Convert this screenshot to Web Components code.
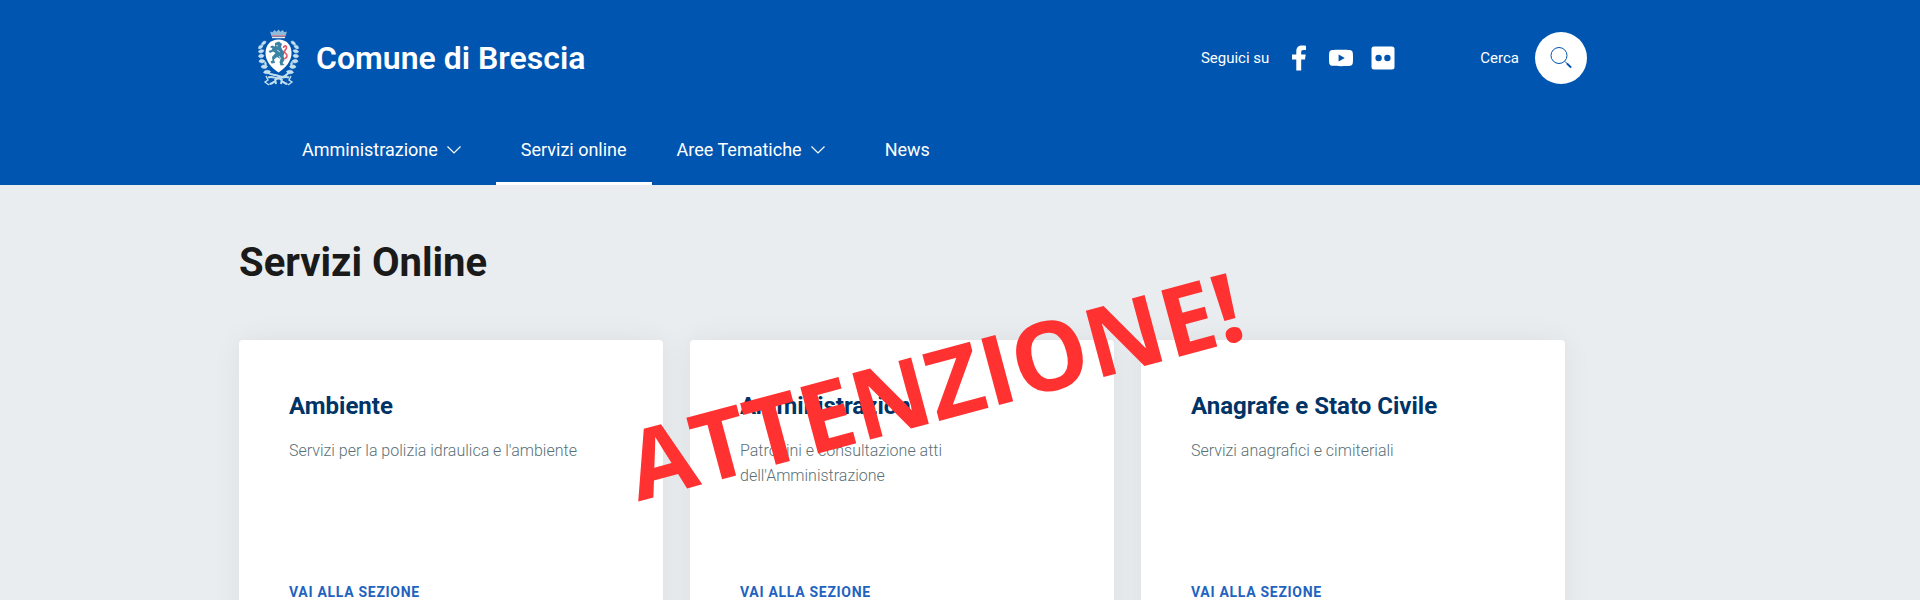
<!DOCTYPE html>
<html lang="it">
<head>
    <meta charset="utf-8">
    <meta name="viewport" content="width=device-width, initial-scale=1">
    <title>Servizi Online - Comune di Brescia</title>
    <style>
        html, body {
            margin: 0;
            height: 100%;
        }
        body {
            --blue: #0055b0;
            --navy: #003366;
            --link: #1f63c0;
            display: flex;
            flex-direction: column;
            overflow: hidden;
            background: #e9edf0;
            color: #1a1a1a;
            font-family: Roboto, "Liberation Sans", sans-serif;
        }
    </style>
</head>
<body>
    <site-header>
        <site-brand slot="brand">Comune di Brescia</site-brand>
        <social-links slot="tools">Seguici su</social-links>
        <search-button slot="tools">Cerca</search-button>
        <nav-item slot="nav" dropdown>Amministrazione</nav-item>
        <nav-item slot="nav" active>Servizi online</nav-item>
        <nav-item slot="nav" dropdown>Aree Tematiche</nav-item>
        <nav-item slot="nav">News</nav-item>
    </site-header>

    <services-section heading="Servizi Online">
        <service-card heading="Ambiente">Servizi per la polizia idraulica e l'ambiente</service-card>
        <service-card heading="Amministrazione">Patrocini e consultazione atti dell'Amministrazione</service-card>
        <service-card heading="Anagrafe e Stato Civile">Servizi anagrafici e cimiteriali</service-card>
        <warning-stamp slot="overlay">ATTENZIONE!</warning-stamp>
    </services-section>

    <script>
        class SiteHeader extends HTMLElement {
            connectedCallback() {
                this.attachShadow({ mode: 'open' });
                this.shadowRoot.innerHTML = `
                    <style>
                        :host {
                            display: block;
                            flex: none;
                            background: var(--blue);
                            color: #fff;
                        }
                        .top {
                            display: flex;
                            align-items: center;
                            justify-content: space-between;
                            padding: 29px 333px 28px 258px;
                        }
                        .tools {
                            display: flex;
                            align-items: center;
                            gap: 85px;
                        }
                        nav {
                            display: flex;
                            padding: 0 277px;
                        }
                    </style>
                    <header>
                        <div class="top">
                            <slot name="brand"></slot>
                            <div class="tools"><slot name="tools"></slot></div>
                        </div>
                        <nav aria-label="Principale"><slot name="nav"></slot></nav>
                    </header>
                `;
            }
        }
        customElements.define('site-header', SiteHeader);

        class SiteBrand extends HTMLElement {
            connectedCallback() {
                this.attachShadow({ mode: 'open' });
                this.shadowRoot.innerHTML = `
                    <style>
                        :host { display: block; }
                        a {
                            display: flex;
                            align-items: center;
                            gap: 16px;
                            color: inherit;
                            text-decoration: none;
                            font-size: 32px;
                            line-height: 40px;
                            font-weight: 600;
                        }
                        svg { display: block; }
                    </style>
                    <a href="#">
                        <svg width="42" height="58" viewBox="0 0 42 58" aria-hidden="true">
                            <!-- crown -->
                            <path d="M13.500 7 12 2.500l2.500.700L16.500 1l2 1.700 2-2.200 2 2.200L24.500 1l2 2.200 2.500-.700L27.500 7z" fill="#8fbcd8"/>
                            <path d="M13.500 6.300h14v1.200h-14z" fill="#e8747f"/>
                            <path d="M14 7.800h13v1.400H14z" fill="#dcecf5"/>
                            <!-- shield -->
                            <path d="M20.500 10.500C28 10.500 33.500 15.500 33.500 24 33.500 32 28 38.500 20.500 43.500 13 38.500 7.500 32 7.500 24 7.500 15.500 13 10.500 20.500 10.500z" fill="#fff"/>
                            <!-- lion -->
                            <path d="M17 14l4-1.500 3 2.500-1 3 1.500 3 2 2-1 4 1 4-2 3 2 2-4 .500-1-3.500 1-3-3.500-2-3 2.500 1 3.500-3.500.500-1-2 2-1-.500-3.500 3.500-4-2.500-1.500-3 1.500-1.500-2 3-1 1-1.500-2.500-1.500 2-1.500 3 1z" fill="#3a83a4"/>
                            <path d="M18 16.500l2 .500M19 21l3 2M21 27l2 3" stroke="#b9dcea" stroke-width="1"/>
                            <path d="M25.500 19c0-2.500 3-3 3-.500s-2.500 2.500-2 4.500 3 1.500 2.500 4-2 2-2.500 3" fill="none" stroke="#e8566a" stroke-width="1.600"/>
                            <!-- laurel branches -->
                            <g id="branch" fill="#c4e0ef" stroke="#c4e0ef" stroke-width=".7" stroke-linejoin="round">
                                <path d="M8 12.500c-2.500-1-4 .500-4.500 3 2.500.500 4-.500 4.500-3z"/>
                                <path d="M5 16.500c-2.500-1-4.500 0-4.500 3 2.500.500 4-.500 4.500-3z"/>
                                <path d="M6 21.500c-2-1.500-5-1-5.500 1.500 2 1.500 4.500 1 5.500-1.500z"/>
                                <path d="M6 26.500c-2-2-5-1.500-5.500 1 2 2 4.500 1.500 5.500-1z"/>
                                <path d="M7 32c-2-2-5.500-2-6 .500 2 2 5 2 6-.500z"/>
                                <path d="M9.500 37.500c-2.500-2-5.500-2-6.500.500 2 2 5.500 2 6.500-.500z"/>
                                <path d="M12.500 42.500c-2.500-2-6-1.500-7 1 2.500 2 6 1.500 7-1z"/>
                                <path d="M8 37c1-2 0-4-1-4.500-1 2 0 3.500 1 4.500z"/>
                            </g>
                            <use href="#branch" transform="matrix(-1 0 0 1 41 0)"/>
                            <!-- ribbon and knot -->
                            <g fill="none" stroke="#c4e0ef" stroke-width="2">
                                <path d="M10 43.500c3 3 6 1.500 10.500 3.500s7 0 10.500-3.500"/>
                                <path d="M10 48.500c4-2 7 1 10.500 1s6-3 10.500-1"/>
                                <path d="M20.500 49c-3 0-4 6-9 6M20.500 49c3 0 4 6 9 6M17 50l1 5M24 50l-1 5"/>
                                <path d="M8 47l2 4-3 2 4 3M33 47l-2 4 3 2-4 3" stroke-width="1.400"/>
                            </g>
                        </svg>
                        <span><slot></slot></span>
                    </a>
                `;
            }
        }
        customElements.define('site-brand', SiteBrand);

        class SocialLinks extends HTMLElement {
            connectedCallback() {
                this.attachShadow({ mode: 'open' });
                this.shadowRoot.innerHTML = `
                    <style>
                        :host {
                            display: flex;
                            align-items: center;
                            gap: 18px;
                            font-size: 15px;
                            line-height: 24px;
                        }
                        a { color: inherit; }
                        svg {
                            display: block;
                            fill: currentColor;
                        }
                    </style>
                    <span><slot></slot></span>
                    <a href="#" aria-label="Facebook">
                        <svg width="24" height="26" viewBox="0 0 24 26"><path d="M9.300 25.500V14.500H5v-5h4.300V6.300C9.300 2.200 11.600.500 15.200.500c1.600 0 3.300.200 3.800.300v4.200h-2.400c-2 0-2.400.900-2.400 2.300v2.200h4.500l-.700 5h-3.800v11z"/></svg>
                    </a>
                    <a href="#" aria-label="YouTube">
                        <svg width="24" height="24" viewBox="0 0 24 24"><path fill-rule="evenodd" d="M3 4c3-.500 15-.500 18 0 2 .300 2.600 1.500 2.800 3 .300 2.500.300 7.500 0 10-.200 1.500-.8 2.500-2.800 2.800-3 .500-15 .500-18 0-2-.300-2.600-1.300-2.800-2.800-.300-2.500-.300-7.500 0-10C.4 5.500 1 4.300 3 4zm6.600 4.500v7L15.800 12z"/></svg>
                    </a>
                    <a href="#" aria-label="Flickr">
                        <svg width="24" height="24" viewBox="0 0 24 24"><path fill-rule="evenodd" d="M3 .500h18A2.500 2.500 0 0 1 23.500 3v18a2.500 2.500 0 0 1-2.500 2.500H3A2.500 2.500 0 0 1 .500 21V3A2.500 2.500 0 0 1 3 .500zM7.600 8.800a3.200 3.200 0 1 0 0 6.400 3.200 3.200 0 0 0 0-6.400zm8.800 0a3.200 3.200 0 1 0 0 6.400 3.200 3.200 0 0 0 0-6.400z"/></svg>
                    </a>
                `;
            }
        }
        customElements.define('social-links', SocialLinks);

        class SearchButton extends HTMLElement {
            connectedCallback() {
                this.attachShadow({ mode: 'open' });
                this.shadowRoot.innerHTML = `
                    <style>
                        :host {
                            display: flex;
                            align-items: center;
                            gap: 16px;
                            font-size: 15px;
                            line-height: 24px;
                        }
                        button {
                            display: flex;
                            align-items: center;
                            justify-content: center;
                            width: 52px;
                            height: 52px;
                            padding: 0;
                            border: 0;
                            border-radius: 50%;
                            background: #fff;
                            color: var(--blue);
                        }
                    </style>
                    <label for="search"><slot></slot></label>
                    <button id="search" type="button" aria-label="Cerca">
                        <svg width="24" height="24" viewBox="0 0 24 24" fill="none" stroke="currentColor">
                            <circle cx="10" cy="9.500" r="8"/>
                            <path d="M15.800 15.300l6.200 6.200"/>
                            <path d="M18 17.500l4 4" stroke-width="1.800"/>
                        </svg>
                    </button>
                `;
            }
        }
        customElements.define('search-button', SearchButton);

        class NavItem extends HTMLElement {
            connectedCallback() {
                const chevron = `
                    <svg width="16" height="16" viewBox="0 0 16 16" fill="none" stroke="currentColor" stroke-width="1.200" aria-hidden="true">
                        <path d="M1.500 4.500L8 11l6.500-6.500"/>
                    </svg>
                `;
                this.attachShadow({ mode: 'open' });
                this.shadowRoot.innerHTML = `
                    <style>
                        :host { display: block; }
                        a {
                            display: flex;
                            align-items: center;
                            gap: 8px;
                            padding: 23px 25px 20px;
                            border-bottom: 3px solid transparent;
                            color: inherit;
                            text-decoration: none;
                            font-size: 18px;
                            line-height: 24px;
                        }
                        :host([active]) a { border-color: #fff; }
                        svg { margin-right: 9px; }
                    </style>
                    <a href="#"><span><slot></slot></span>${this.hasAttribute('dropdown') ? chevron : ''}</a>
                `;
            }
        }
        customElements.define('nav-item', NavItem);

        class ServicesSection extends HTMLElement {
            connectedCallback() {
                this.attachShadow({ mode: 'open' });
                this.shadowRoot.innerHTML = `
                    <style>
                        :host {
                            display: block;
                            position: relative;
                            padding: 54px 355px 54px 239px;
                        }
                        h1 {
                            margin: 0 0 53px;
                            font-size: 40px;
                            line-height: 48px;
                            font-weight: 700;
                        }
                        .cards {
                            display: grid;
                            grid-template-columns: repeat(3, 1fr);
                            gap: 27px;
                        }
                    </style>
                    <main>
                        <h1></h1>
                        <div class="cards"><slot></slot></div>
                    </main>
                    <slot name="overlay"></slot>
                `;
                this.shadowRoot.querySelector('h1').textContent = this.getAttribute('heading');
            }
        }
        customElements.define('services-section', ServicesSection);

        class ServiceCard extends HTMLElement {
            connectedCallback() {
                this.attachShadow({ mode: 'open' });
                this.shadowRoot.innerHTML = `
                    <style>
                        :host {
                            display: flex;
                            flex-direction: column;
                            align-items: flex-start;
                            box-sizing: border-box;
                            min-height: 312px;
                            padding: 50px;
                            border-radius: 4px;
                            background: #fff;
                            box-shadow: 0 0 30px rgba(0, 0, 0, 0.06);
                        }
                        h2 {
                            margin: 0 0 16px;
                            color: var(--navy);
                            font-size: 24px;
                            line-height: 32px;
                            font-weight: 700;
                        }
                        p {
                            margin: 0;
                            max-width: 300px;
                            color: #5b6f75;
                            font-size: 16px;
                            line-height: 25px;
                            font-weight: 300;
                        }
                        a {
                            margin-top: auto;
                            color: var(--link);
                            font-size: 14px;
                            line-height: 20px;
                            font-weight: 700;
                            letter-spacing: 0.05em;
                            text-decoration: none;
                            text-transform: uppercase;
                        }
                    </style>
                    <h2></h2>
                    <p><slot></slot></p>
                    <a href="#">Vai alla sezione</a>
                `;
                this.shadowRoot.querySelector('h2').textContent = this.getAttribute('heading');
            }
        }
        customElements.define('service-card', ServiceCard);

        class WarningStamp extends HTMLElement {
            connectedCallback() {
                this.attachShadow({ mode: 'open' });
                this.shadowRoot.innerHTML = `
                    <style>
                        :host {
                            position: absolute;
                            top: 151px;
                            left: 618px;
                            transform: rotate(-15deg);
                            color: #ff3131;
                            font: 700 96px/96px "Open Sans", "Noto Sans", sans-serif;
                            white-space: nowrap;
                        }
                    </style>
                    <slot></slot>
                `;
            }
        }
        customElements.define('warning-stamp', WarningStamp);
    </script>
</body>
</html>
